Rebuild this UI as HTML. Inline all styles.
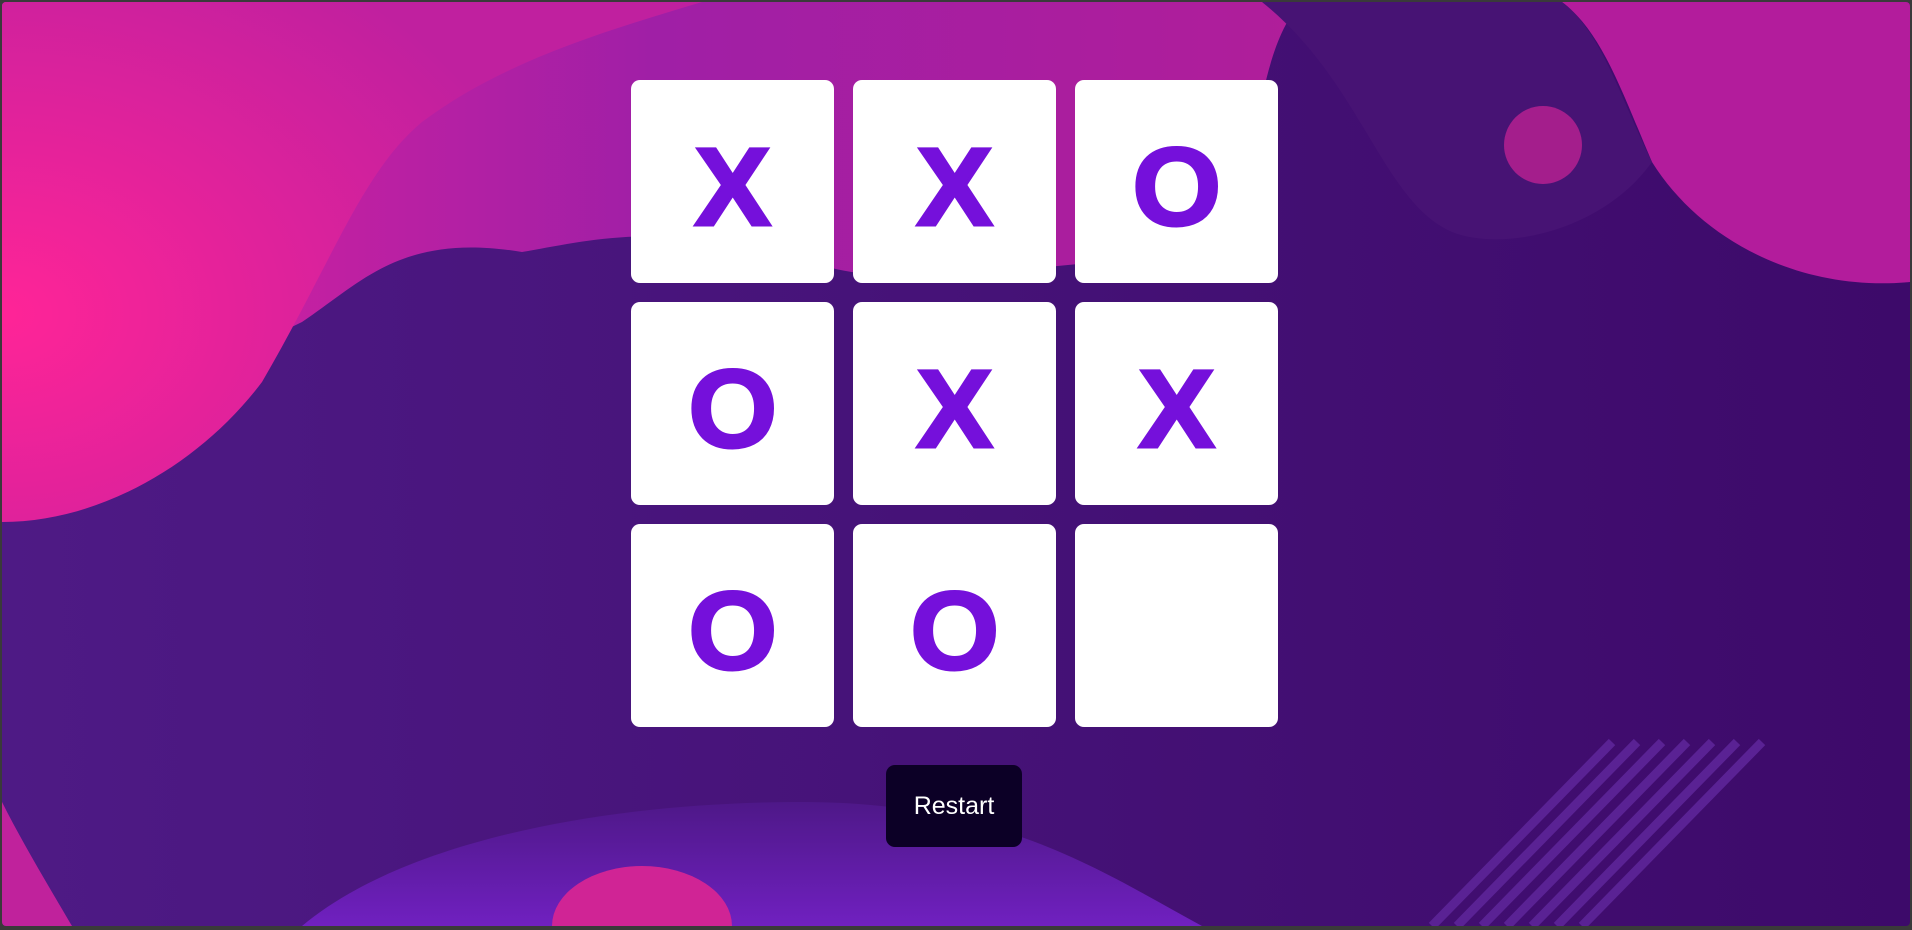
<!DOCTYPE html>
<html><head><style>
html,body{margin:0;padding:0;width:1912px;height:930px;overflow:hidden;background:#3a3a3a}
#bg{position:absolute;left:2px;top:2px;width:1908px;height:924px;border-radius:4px;overflow:hidden}
.grid{position:absolute;display:grid;grid-template-columns:repeat(3,203px);grid-template-rows:repeat(3,203px);gap:19px}
.c{background:#fff;border-radius:9px;display:flex;align-items:center;justify-content:center;font:bold 110px "Liberation Sans",Arial,sans-serif;color:#7510db;line-height:1}
.c span{display:inline-block;transform:translateY(6px) scaleX(1.04);-webkit-text-stroke:3px #7510db}
.btn{position:absolute;width:136px;height:82px;background:#0c0026;border-radius:9px;color:#fff;font:25px "Liberation Sans",Arial,sans-serif;display:flex;align-items:center;justify-content:center}
</style></head><body>
<div id="bg">
<svg width="1908" height="924" viewBox="0 0 1908 924" style="position:absolute;left:0;top:0">
<defs>
<linearGradient id="top" x1="0" y1="0" x2="1" y2="0"><stop offset="0" stop-color="#e1229e"/><stop offset="0.5" stop-color="#a01fa6"/><stop offset="1" stop-color="#b01e9a"/></linearGradient>
<radialGradient id="lp" cx="0" cy="0.6" r="0.8"><stop offset="0" stop-color="#ff2497"/><stop offset="1" stop-color="#c0209f"/></radialGradient>
<linearGradient id="base" x1="0" y1="0" x2="1" y2="0"><stop offset="0" stop-color="#4e1a85"/><stop offset="1" stop-color="#3d0a6a"/></linearGradient>
<linearGradient id="bot" x1="0" y1="0" x2="0" y2="1"><stop offset="0" stop-color="#4e1888"/><stop offset="1" stop-color="#7020c0"/></linearGradient>
</defs>
<rect width="1908" height="924" fill="url(#base)"/>
<path d="M0 0H1908V280C1800 290 1700 240 1650 160C1620 90 1600 30 1560 0Z" fill="#b31c9c"/>
<path d="M0 0H1300C1260 40 1250 150 1240 250C1000 260 900 300 780 250C650 220 580 240 520 250C400 230 360 280 300 320C220 360 120 380 0 430Z" fill="url(#top)"/>
<path d="M0 0H700C600 30 500 60 420 120C360 170 330 260 260 380C200 460 100 520 0 520Z" fill="url(#lp)"/>
<path d="M1260 0H1560C1600 30 1620 100 1650 160C1600 230 1500 250 1450 230C1380 200 1360 80 1260 0Z" fill="#471374"/>
<circle cx="1541" cy="143" r="39" fill="#a41e8c"/>
<path d="M300 924C400 840 600 800 800 800C1000 800 1100 870 1200 924Z" fill="url(#bot)"/>
<ellipse cx="640" cy="924" rx="90" ry="60" fill="#d02495"/>
<path d="M0 800C20 840 50 890 70 924H0Z" fill="#c0229c"/>
<g stroke="#5a2294" stroke-width="9">
<path d="M1430 924L1610 740M1455 924L1635 740M1480 924L1660 740M1505 924L1685 740M1530 924L1710 740M1555 924L1735 740M1580 924L1760 740"/>
</g>
</svg>
<div class="grid" style="left:629px;top:78px">
<div class="c"><span>X</span></div><div class="c"><span>X</span></div><div class="c"><span>O</span></div>
<div class="c"><span>O</span></div><div class="c"><span>X</span></div><div class="c"><span>X</span></div>
<div class="c"><span>O</span></div><div class="c"><span>O</span></div><div class="c"></div>
</div>
<div class="btn" style="left:884px;top:763px">Restart</div>
</div>
</body></html>
